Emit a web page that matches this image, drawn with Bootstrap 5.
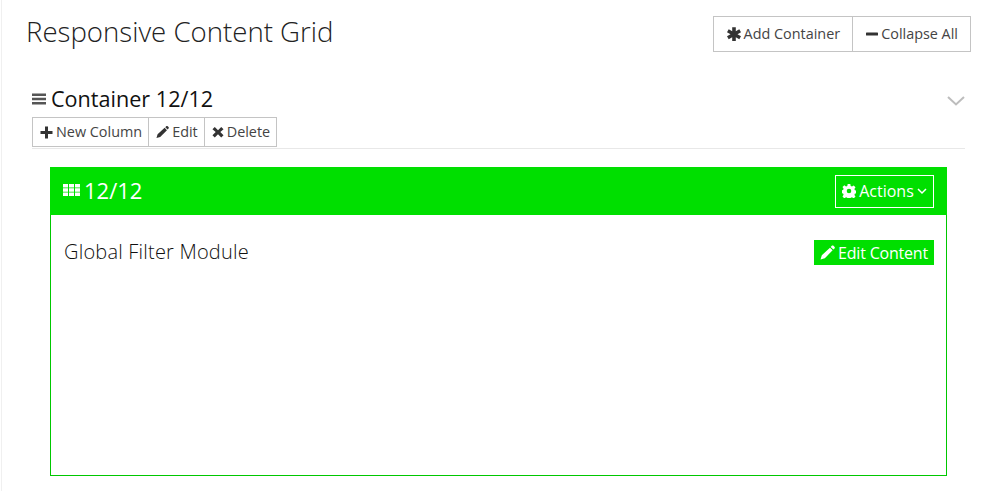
<!DOCTYPE html>
<html lang="en">
<head>
<meta charset="utf-8">
<title>Responsive Content Grid</title>
<link href="https://cdn.jsdelivr.net/npm/bootstrap@5.3.0/dist/css/bootstrap.min.css" rel="stylesheet">
<style>
html,body{height:491px;overflow:hidden}
body{font-family:"Open Sans",sans-serif;background:#fff;color:#333}
.page-wrap{margin-left:1px;border-left:1px solid #f0f0f0;height:491px;padding:16px 14px 0 24px}
.page-title{font-size:27.6px;font-weight:300;color:#222;margin:0;line-height:30px}
.tool-btn{border:1px solid #c4c4c4;background:#fff;color:#444;font-size:14.4px;line-height:20px;padding:0 6px 0 7px;border-radius:0;display:inline-flex;align-items:center;gap:3px;white-space:nowrap}
.tool-btn+.tool-btn{margin-left:-1px}
.tool-lg{height:36px;padding:0 12px 0 13px;gap:3px}
.tool-sm{height:30px}
.tool-btn svg{fill:#333;flex:none}
.box-head{margin:32px 6px 0 6px;padding-bottom:1px;border-bottom:1px solid #e8e8e8}
.btn-row{margin-top:3px}
.box-title{font-size:21.6px;font-weight:400;line-height:30px;color:#111;margin:0;gap:5px}
.box-title svg{fill:#555}
.grid-panel{margin:18px 24px 0 24px;border:1px solid #00c800;height:309px}
.panel-top{background:#00df00;color:#fff;height:48px;margin:-1px -1px 0;padding:0 13px;font-size:22px;line-height:30px}
.panel-label{padding-bottom:2px}
.panel-top svg,.edit-btn svg{fill:#fff}
.act-btn{border:1px solid #fff;background:transparent;color:#fff;height:33px;width:99px;font-size:16px;padding:0;gap:3px;border-radius:0}
.edit-btn{background:#00df00;color:#fff;border:0;border-radius:0;height:25px;width:120px;padding:0;font-size:16px;gap:3px;letter-spacing:-.2px}
.act-btn:hover,.edit-btn:hover{color:#fff}
.panel-text{padding:25px 12px 0 13px}
.module-name{font-size:20px;font-weight:300;color:#111;line-height:23px;letter-spacing:.2px}
</style>
</head>
<body>
<div class="page-wrap">
  <div class="d-flex justify-content-between align-items-start">
    <h1 class="page-title">Responsive Content Grid</h1>
    <div class="d-flex">
      <button type="button" class="tool-btn tool-lg">
        <svg width="14" height="14" viewBox="0 0 14 14"><path d="M5.200 0.300h3.600v4l3.500-2 1.700 3L10.500 7.200l3.500 2-1.700 3-3.500-2v3.900H5.200v-3.900l-3.500 2-1.700-3 3.500-2L0 5.300l1.700-3 3.500 2z"/></svg>
        Add Container</button>
      <button type="button" class="tool-btn tool-lg">
        <svg width="12" height="14" viewBox="0 0 12 14"><rect x="0" y="5.500" width="12" height="3" rx=".6"/></svg>
        Collapse All</button>
    </div>
  </div>

  <div class="box-head">
    <div class="d-flex justify-content-between align-items-center">
      <h2 class="box-title d-flex align-items-center">
        <svg width="14" height="14" viewBox="0 0 14 14"><path d="M0 1.500h14v2.500H0zM0 5.800h14v2.500H0zM0 10.100h14v2.500H0z"/></svg>
        Container 12/12</h2>
      <svg class="mt-1" width="18" height="12" viewBox="0 0 18 12"><path d="M1 2l8 7.500L17 2" fill="none" stroke="#bdbdbd" stroke-width="2"/></svg>
    </div>
    <div class="d-flex btn-row">
      <button type="button" class="tool-btn tool-sm">
        <svg width="13" height="13" viewBox="0 0 13 13"><path d="M5 .5h3V5h4.500v3H8v4.500H5V8H.500V5H5z"/></svg>
        New Column</button>
      <button type="button" class="tool-btn tool-sm">
        <svg width="13" height="14" viewBox="0 0 14 14"><path d="M9.300 2.500l2.500 2.500-7.300 7.300-4 1.200 1.200-4zM10 1.800L11 .8c.5-.5 1.100-.5 1.600 0l.9.9c.5.5.5 1.100 0 1.600l-1 1z"/></svg>
        Edit</button>
      <button type="button" class="tool-btn tool-sm">
        <svg width="12" height="12" viewBox="0 0 13 13"><path d="M3 1l3.500 3.500L10 1l2.500 2.500L9 6.500l3.500 3.500L10 12.500 6.500 9 3 12.500.500 10 4 6.500.500 3.500z"/></svg>
        Delete</button>
    </div>
  </div>

  <div class="grid-panel">
    <div class="panel-top d-flex justify-content-between align-items-center">
      <div class="panel-label d-flex align-items-center gap-1">
        <svg width="17" height="14" viewBox="0 0 17 14"><path d="M0 1h5v3.500H0zM6 1h5v3.500H6zM12 1h5v3.500h-5zM0 5.300h5v3.500H0zM6 5.300h5v3.500H6zM12 5.300h5v3.500h-5zM0 9.600h5v3.500H0zM6 9.600h5v3.500H6zM12 9.600h5v3.500h-5z"/></svg>
        <span>12/12</span>
      </div>
      <button type="button" class="btn act-btn d-inline-flex align-items-center justify-content-center">
        <svg width="14" height="14" viewBox="0 0 14 14"><path fill-rule="evenodd" d="M5.700 0h2.600l.4 2 1.300.5 1.700-1.100 1.800 1.800-1.100 1.700.5 1.300 2 .4v2.600l-2 .4-.5 1.300 1.100 1.700-1.800 1.800-1.700-1.100-1.300.5-.4 2H5.700l-.4-2-1.300-.5-1.700 1.100L.5 12.500l1.100-1.700-.5-1.300-2-.4V6.500l2-.4.5-1.300L.5 3.100 2.300 1.300 4 2.400l1.300-.5zM7 4.700a2.300 2.300 0 1 0 0 4.600 2.300 2.300 0 0 0 0-4.600z"/></svg>
        Actions
        <svg width="10" height="8" viewBox="0 0 10 8"><path d="M1 2l4 4 4-4" fill="none" stroke="#fff" stroke-width="1.500"/></svg>
      </button>
    </div>
    <div class="panel-text d-flex justify-content-between align-items-start">
      <span class="module-name">Global Filter Module</span>
      <button type="button" class="btn edit-btn d-inline-flex align-items-center justify-content-center">
        <svg width="15" height="15" viewBox="0 0 14 14"><path d="M9.300 2.500l2.500 2.500-7.300 7.300-4 1.200 1.200-4zM10 1.800L11 .8c.5-.5 1.100-.5 1.600 0l.9.9c.5.5.5 1.100 0 1.600l-1 1z"/></svg>
        Edit Content</button>
    </div>
  </div>
</div>
</body>
</html>
